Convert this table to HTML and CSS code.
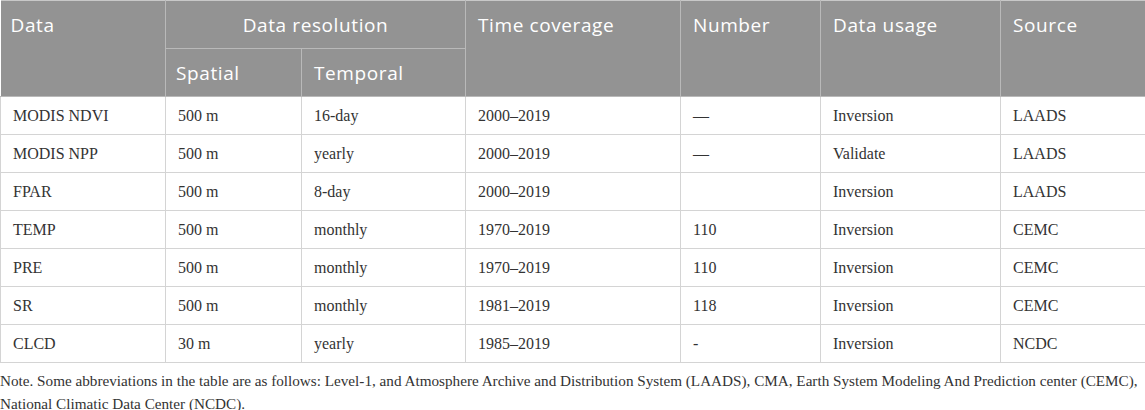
FILE: index.html
```html
<!DOCTYPE html>
<html lang="en">
<head>
  <meta charset="UTF-8">
  <title>Data sources</title>
  <link rel="stylesheet" href="styles.css">
</head>
<body>
  <table class="data-table">
    <colgroup>
      <col style="width:165px">
      <col style="width:136px">
      <col style="width:164px">
      <col style="width:215px">
      <col style="width:140px">
      <col style="width:180px">
      <col style="width:145px">
    </colgroup>
    <thead>
      <tr>
        <th rowspan="2">Data</th>
        <th colspan="2" class="center">Data resolution</th>
        <th rowspan="2">Time coverage</th>
        <th rowspan="2">Number</th>
        <th rowspan="2">Data usage</th>
        <th rowspan="2">Source</th>
      </tr>
      <tr>
        <th>Spatial</th>
        <th>Temporal</th>
      </tr>
    </thead>
    <tbody>
      <tr><td>MODIS NDVI</td><td>500 m</td><td>16-day</td><td>2000–2019</td><td>—</td><td>Inversion</td><td>LAADS</td></tr>
      <tr><td>MODIS NPP</td><td>500 m</td><td>yearly</td><td>2000–2019</td><td>—</td><td>Validate</td><td>LAADS</td></tr>
      <tr><td>FPAR</td><td>500 m</td><td>8-day</td><td>2000–2019</td><td></td><td>Inversion</td><td>LAADS</td></tr>
      <tr><td>TEMP</td><td>500 m</td><td>monthly</td><td>1970–2019</td><td>110</td><td>Inversion</td><td>CEMC</td></tr>
      <tr><td>PRE</td><td>500 m</td><td>monthly</td><td>1970–2019</td><td>110</td><td>Inversion</td><td>CEMC</td></tr>
      <tr><td>SR</td><td>500 m</td><td>monthly</td><td>1981–2019</td><td>118</td><td>Inversion</td><td>CEMC</td></tr>
      <tr><td>CLCD</td><td>30 m</td><td>yearly</td><td>1985–2019</td><td>-</td><td>Inversion</td><td>NCDC</td></tr>
    </tbody>
  </table>
  <p class="note">Note. Some abbreviations in the table are as follows: Level-1, and Atmosphere Archive and Distribution System (LAADS), CMA, Earth System Modeling And Prediction center (CEMC), National Climatic Data Center (NCDC).</p>
</body>
</html>
```

FILE: styles.css
```css
body {
  margin: 0;
  background: #fff;
  font-family: "Liberation Serif", serif;
  color: #333;
}

.data-table {
  width: 1145px;
  table-layout: fixed;
  border-collapse: collapse;
  border-top: 1px solid #c8c8c8;
}

.data-table th {
  background: #939393;
  color: #fff;
  font-family: "Open Sans", sans-serif;
  font-weight: normal;
  font-size: 19px;
  letter-spacing: 0.6px;
  text-align: left;
  vertical-align: top;
  height: 48px;
  padding: 11px 12px 0;
  box-sizing: border-box;
  border: 1px solid #b9b9b9;
  border-top: none;
}

.data-table th:first-child {
  padding-left: 10px;
  border-left: none;
}

.data-table th.center {
  text-align: center;
}

.data-table td {
  font-size: 16px;
  height: 38px;
  padding: 1px 12px 0;
  box-sizing: border-box;
  border: 1px solid #d4d4d4;
  vertical-align: middle;
}

.note {
  margin: 0;
  padding-top: 6px;
  font-size: 15.2px;
  line-height: 23px;
}
```
